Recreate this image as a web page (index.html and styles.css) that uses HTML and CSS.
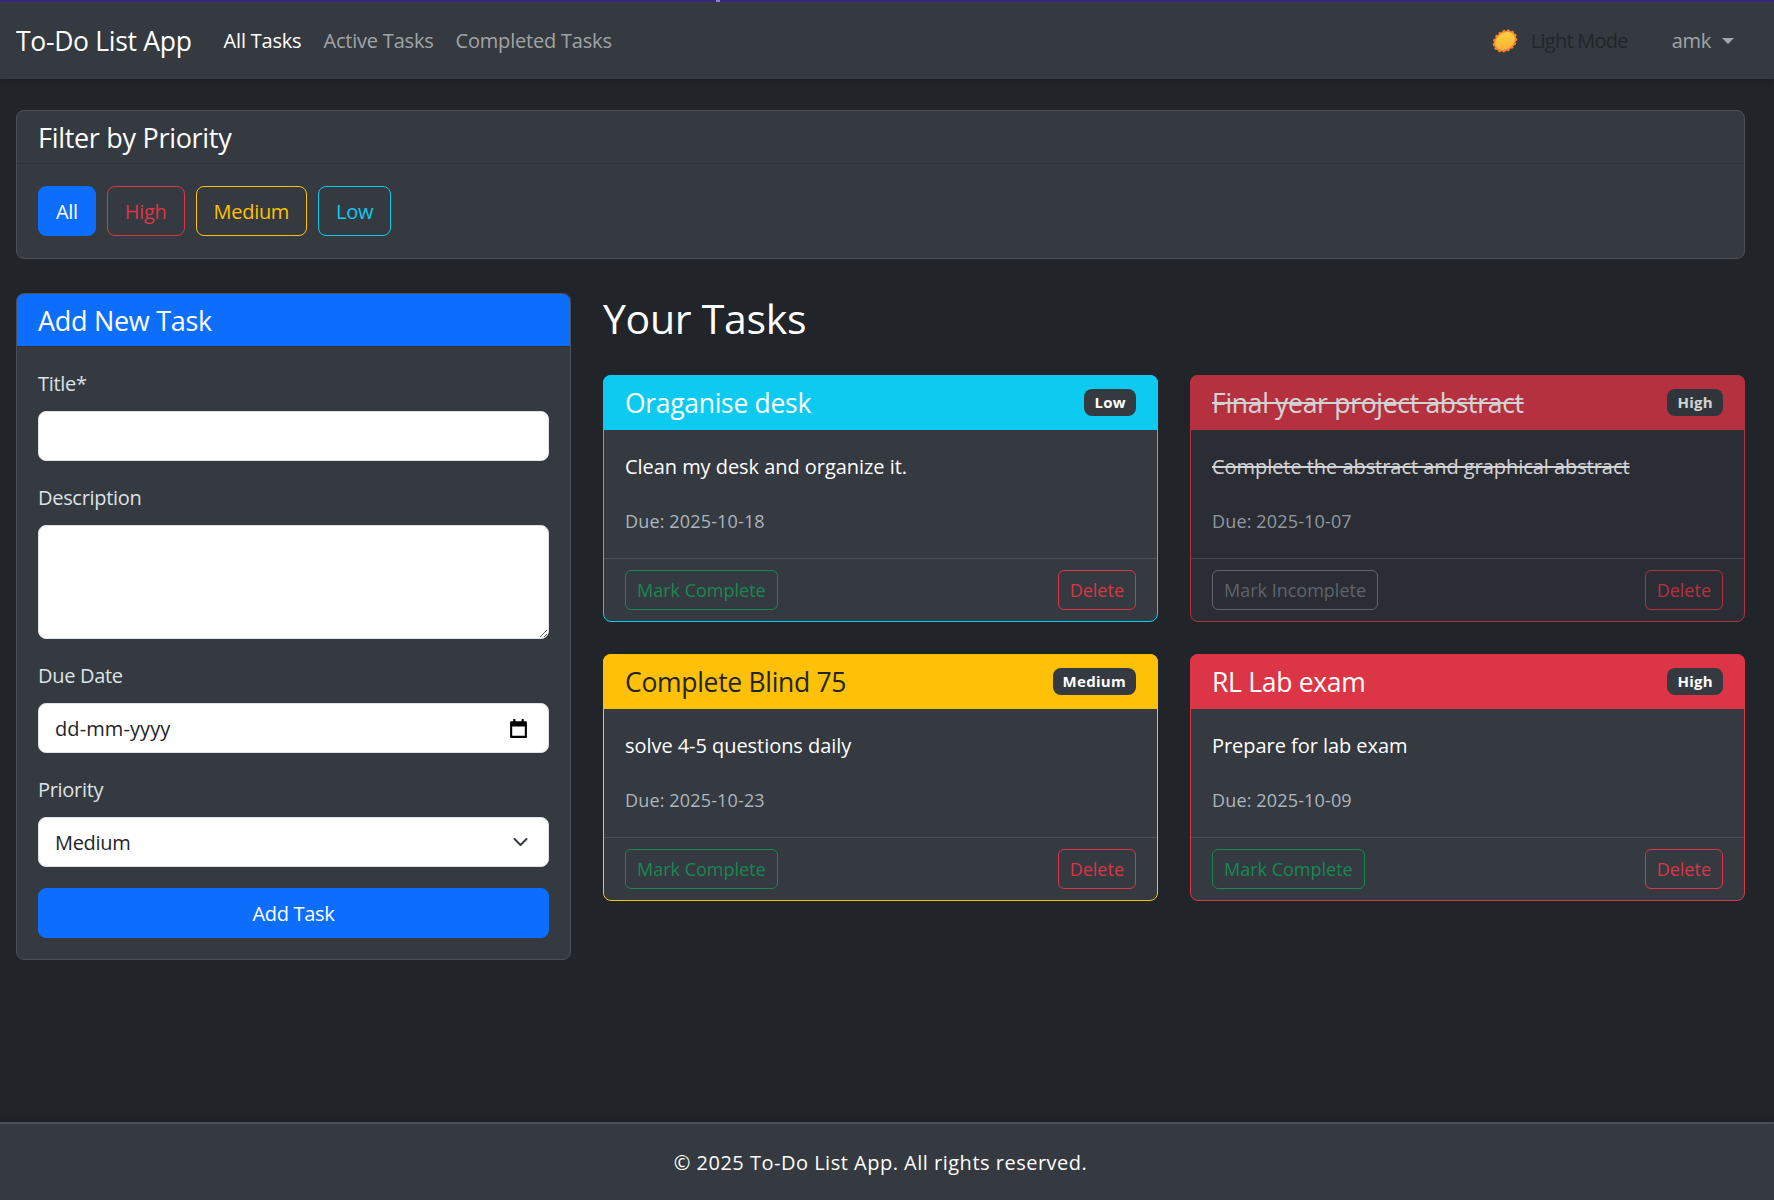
FILE: index.html
```html
<!DOCTYPE html>
<html lang="en">
<head>
    <meta charset="UTF-8">
    <title>To-Do List App</title>
    <link rel="stylesheet" href="styles.css">
</head>
<body>
    <nav class="navbar">
        <a class="brand" href="#">To-Do List App</a>
        <ul class="nav-links">
            <li><a class="nav-link active" href="#">All Tasks</a></li>
            <li><a class="nav-link" href="#">Active Tasks</a></li>
            <li><a class="nav-link" href="#">Completed Tasks</a></li>
        </ul>
        <div class="nav-right">
            <div class="theme-toggle">
                <svg class="sun" width="28" height="28" viewBox="0 0 28 28">
                    <defs>
                        <linearGradient id="sunFill" x1="0.85" y1="0" x2="0.15" y2="1">
                            <stop offset="0" stop-color="#ffd53f"/>
                            <stop offset="1" stop-color="#f9ae33"/>
                        </linearGradient>
                    </defs>
                    <g transform="rotate(-35 14 14)">
                        <ellipse cx="14" cy="14" rx="12" ry="9.5" fill="#f58634" stroke="#f58634" stroke-width="2" stroke-dasharray="2.5 2"/>
                        <ellipse cx="14" cy="14" rx="10.5" ry="8" fill="url(#sunFill)"/>
                    </g>
                </svg>
                <span class="theme-label">Light Mode</span>
            </div>
            <a class="user-menu" href="#">amk<span class="caret"></span></a>
        </div>
    </nav>

    <main class="content">
        <section class="card filter-card">
            <h5 class="card-header">Filter by Priority</h5>
            <div class="filter-body">
                <button class="btn btn-primary">All</button>
                <button class="btn btn-outline-danger">High</button>
                <button class="btn btn-outline-warning">Medium</button>
                <button class="btn btn-outline-info">Low</button>
            </div>
        </section>

        <div class="main-grid">
            <section class="card form-card">
                <h5 class="card-header header-primary">Add New Task</h5>
                <form class="form-body">
                    <div class="form-group">
                        <label for="title">Title*</label>
                        <input class="form-control" type="text" id="title">
                    </div>
                    <div class="form-group">
                        <label for="description">Description</label>
                        <textarea class="form-control desc-input" id="description"></textarea>
                    </div>
                    <div class="form-group">
                        <label for="due">Due Date</label>
                        <input class="form-control date-input" type="text" id="due" value="dd-mm-yyyy">
                    </div>
                    <div class="form-group">
                        <label for="priority">Priority</label>
                        <select class="form-control select-input" id="priority">
                            <option>Low</option>
                            <option selected>Medium</option>
                            <option>High</option>
                        </select>
                    </div>
                    <button class="btn btn-primary btn-block" type="button">Add Task</button>
                </form>
            </section>

            <section class="tasks">
                <h2>Your Tasks</h2>
                <div class="task-grid">
                    <article class="task-card task-low">
                        <div class="task-header">
                            <h5>Oraganise desk</h5>
                            <span class="badge">Low</span>
                        </div>
                        <div class="task-body">
                            <p class="task-desc">Clean my desk and organize it.</p>
                            <p class="task-due">Due: 2025-10-18</p>
                        </div>
                        <div class="task-footer">
                            <button class="btn btn-sm btn-outline-success">Mark Complete</button>
                            <button class="btn btn-sm btn-outline-danger">Delete</button>
                        </div>
                    </article>

                    <article class="task-card task-high task-done">
                        <div class="task-header">
                            <h5>Final year project abstract</h5>
                            <span class="badge">High</span>
                        </div>
                        <div class="task-body">
                            <p class="task-desc">Complete the abstract and graphical abstract</p>
                            <p class="task-due">Due: 2025-10-07</p>
                        </div>
                        <div class="task-footer">
                            <button class="btn btn-sm btn-outline-secondary">Mark Incomplete</button>
                            <button class="btn btn-sm btn-outline-danger">Delete</button>
                        </div>
                    </article>

                    <article class="task-card task-medium">
                        <div class="task-header">
                            <h5>Complete Blind 75</h5>
                            <span class="badge">Medium</span>
                        </div>
                        <div class="task-body">
                            <p class="task-desc">solve 4-5 questions daily</p>
                            <p class="task-due">Due: 2025-10-23</p>
                        </div>
                        <div class="task-footer">
                            <button class="btn btn-sm btn-outline-success">Mark Complete</button>
                            <button class="btn btn-sm btn-outline-danger">Delete</button>
                        </div>
                    </article>

                    <article class="task-card task-high">
                        <div class="task-header">
                            <h5>RL Lab exam</h5>
                            <span class="badge">High</span>
                        </div>
                        <div class="task-body">
                            <p class="task-desc">Prepare for lab exam</p>
                            <p class="task-due">Due: 2025-10-09</p>
                        </div>
                        <div class="task-footer">
                            <button class="btn btn-sm btn-outline-success">Mark Complete</button>
                            <button class="btn btn-sm btn-outline-danger">Delete</button>
                        </div>
                    </article>
                </div>
            </section>
        </div>
    </main>

    <footer class="footer">
        <p>© 2025 To-Do List App. All rights reserved.</p>
    </footer>
</body>
</html>
```

FILE: styles.css
```css
* {
    box-sizing: border-box;
    margin: 0;
    padding: 0;
}

body {
    min-height: 100vh;
    display: flex;
    flex-direction: column;
    background-color: #212529;
    color: #fff;
    font-family: 'Open Sans', 'Noto Sans', sans-serif;
    font-size: 20px;
    letter-spacing: -0.3px;
}

a {
    text-decoration: none;
}

/* navbar */
.navbar {
    position: relative;
    display: flex;
    align-items: center;
    height: 79px;
    padding: 0 40px 0 16px;
    background-color: #343a40;
    border-top: 2px solid #35287a;
    box-shadow: 0 2px 6px rgba(0,0,0,0.25);
}

/* small light tick on the top line */
.navbar::before {
    content: "";
    position: absolute;
    top: -2px;
    left: 716px;
    width: 4px;
    height: 2px;
    background-color: #8a80c8;
}

.brand {
    color: #fff;
    font-size: 26.5px;
    margin-right: 32px;
}

.nav-links {
    display: flex;
    list-style: none;
    gap: 22px;
}

.nav-link {
    color: rgba(255,255,255,0.55);
    letter-spacing: -0.2px;
}

.nav-link.active {
    color: #fff;
}

.nav-right {
    display: flex;
    align-items: center;
    margin-left: auto;
}

.theme-toggle {
    display: flex;
    align-items: center;
    gap: 12px;
    margin-right: 44px;
}

.theme-label {
    color: #212529;
    letter-spacing: -0.75px;
}

.user-menu {
    display: flex;
    align-items: center;
    color: rgba(255,255,255,0.55);
}

.caret {
    margin-left: 11px;
    border-top: 6px solid rgba(255,255,255,0.55);
    border-left: 6px solid transparent;
    border-right: 6px solid transparent;
}

/* page */
.content {
    flex: 1;
    padding: 31px 29px 32px 16px;
}

.card {
    background-color: #343a40;
    border: 1px solid #495057;
    border-radius: 8px;
}

.card-header {
    padding: 11px 21px 9px;
    font-size: 27px;
    font-weight: 500;
    line-height: 32px;
    border-bottom: 1px solid #2e3338;
    border-radius: 7px 7px 0 0;
}

.header-primary {
    background-color: #0d6efd;
}

.filter-body {
    display: flex;
    gap: 11px;
    padding: 22px 21px;
}

.main-grid {
    display: grid;
    grid-template-columns: repeat(3, 1fr);
    gap: 32px;
    align-items: start;
    margin-top: 34px;
}

/* buttons */
.btn {
    height: 50px;
    padding: 0 17px;
    background: transparent;
    border: 1px solid transparent;
    border-radius: 8px;
    color: #fff;
    font-family: inherit;
    font-size: 20px;
    letter-spacing: -0.3px;
    cursor: pointer;
}

.btn-sm {
    height: 40px;
    padding: 0 11px;
    font-size: 18px;
    letter-spacing: 0;
    border-radius: 6px;
}

.btn-block {
    display: block;
    width: 100%;
}

.btn-primary {
    background-color: #0d6efd;
    border-color: #0d6efd;
}

.btn-outline-danger {
    color: #dc3545;
    border-color: #dc3545;
}

.btn-outline-warning {
    color: #ffc107;
    border-color: #ffc107;
}

.btn-outline-info {
    color: #0dcaf0;
    border-color: #0dcaf0;
}

.btn-outline-success {
    color: #198754;
    border-color: #198754;
}

.btn-outline-secondary {
    color: #6c757d;
    border-color: #6c757d;
}

/* form */
.form-body {
    padding: 21px;
}

.form-group {
    margin-bottom: 21px;
}

label {
    display: block;
    margin-bottom: 11px;
    line-height: 32px;
    color: #dee2e6;
}

.form-control {
    display: block;
    width: 100%;
    height: 50px;
    padding: 0 16px;
    background-color: #fff;
    border: 1px solid #dee2e6;
    border-radius: 8px;
    color: #212529;
    font-family: inherit;
    font-size: 20px;
    letter-spacing: -0.3px;
}

.desc-input {
    height: 114px;
    resize: vertical;
}

.date-input {
    letter-spacing: 0.1px;
    background-image: url("data:image/svg+xml,%3Csvg xmlns='http://www.w3.org/2000/svg' viewBox='0 0 20 20'%3E%3Cpath d='M3 3h2V1h2v2h6V1h2v2h2a1 1 0 0 1 1 1v14a1 1 0 0 1-1 1H3a1 1 0 0 1-1-1V4a1 1 0 0 1 1-1zm1 5v9h12V8z' fill='%23000'/%3E%3C/svg%3E");
    background-repeat: no-repeat;
    background-position: right 19px center;
    background-size: 21px 21px;
}

.select-input {
    appearance: none;
    background-image: url("data:image/svg+xml,%3Csvg xmlns='http://www.w3.org/2000/svg' viewBox='0 0 16 16'%3E%3Cpath fill='none' stroke='%23343a40' stroke-linecap='round' stroke-linejoin='round' stroke-width='2' d='m2 5 6 6 6-6'/%3E%3C/svg%3E");
    background-repeat: no-repeat;
    background-position: right 17px center;
    background-size: 21px 16px;
}

/* tasks */
.tasks {
    grid-column: span 2;
}

.tasks h2 {
    margin-bottom: 32px;
    font-size: 41px;
    font-weight: 500;
    line-height: 50px;
}

.task-grid {
    display: grid;
    grid-template-columns: 1fr 1fr;
    gap: 32px;
}

.task-card {
    background-color: #343a40;
    border: 1px solid;
    border-radius: 8px;
}

.task-low {
    border-color: #0dcaf0;
}

.task-medium {
    border-color: #ffc107;
}

.task-high {
    border-color: #dc3545;
}

.task-done {
    opacity: 0.8;
    background-color: #2d3037;
}

.task-header {
    display: flex;
    align-items: center;
    justify-content: space-between;
    height: 55px;
    margin: -1px -1px 0;
    padding: 0 22px;
    border-radius: 8px 8px 0 0;
}

.task-header h5 {
    font-size: 26.5px;
    font-weight: 500;
}

.task-low .task-header {
    background-color: #0dcaf0;
}

.task-medium .task-header {
    background-color: #ffc107;
    color: #212529;
}

.task-high .task-header {
    background-color: #dc3545;
}

.badge {
    padding: 4px 10px;
    background-color: #343a40;
    border-radius: 8px;
    color: #fff;
    font-size: 15px;
    font-weight: 700;
    letter-spacing: 0.3px;
    line-height: 19px;
}

.task-body {
    padding: 21px;
}

.task-desc {
    margin-bottom: 24px;
    line-height: 31px;
    letter-spacing: -0.05px;
}

.task-due {
    color: #adb5bd;
    font-size: 18px;
    line-height: 31px;
    letter-spacing: 0.15px;
}

.task-done h5,
.task-done .task-desc {
    text-decoration: line-through;
}

.task-footer {
    display: flex;
    justify-content: space-between;
    padding: 11px 21px;
    border-top: 1px solid #495057;
}

/* footer */
.footer {
    padding: 23px 13px 22px 0;
    background-color: #343a40;
    border-top: 2px solid #495057;
    box-shadow: 0 -2px 6px rgba(0,0,0,0.25);
    text-align: center;
}

.footer p {
    line-height: 31px;
    letter-spacing: 0.5px;
}
```
